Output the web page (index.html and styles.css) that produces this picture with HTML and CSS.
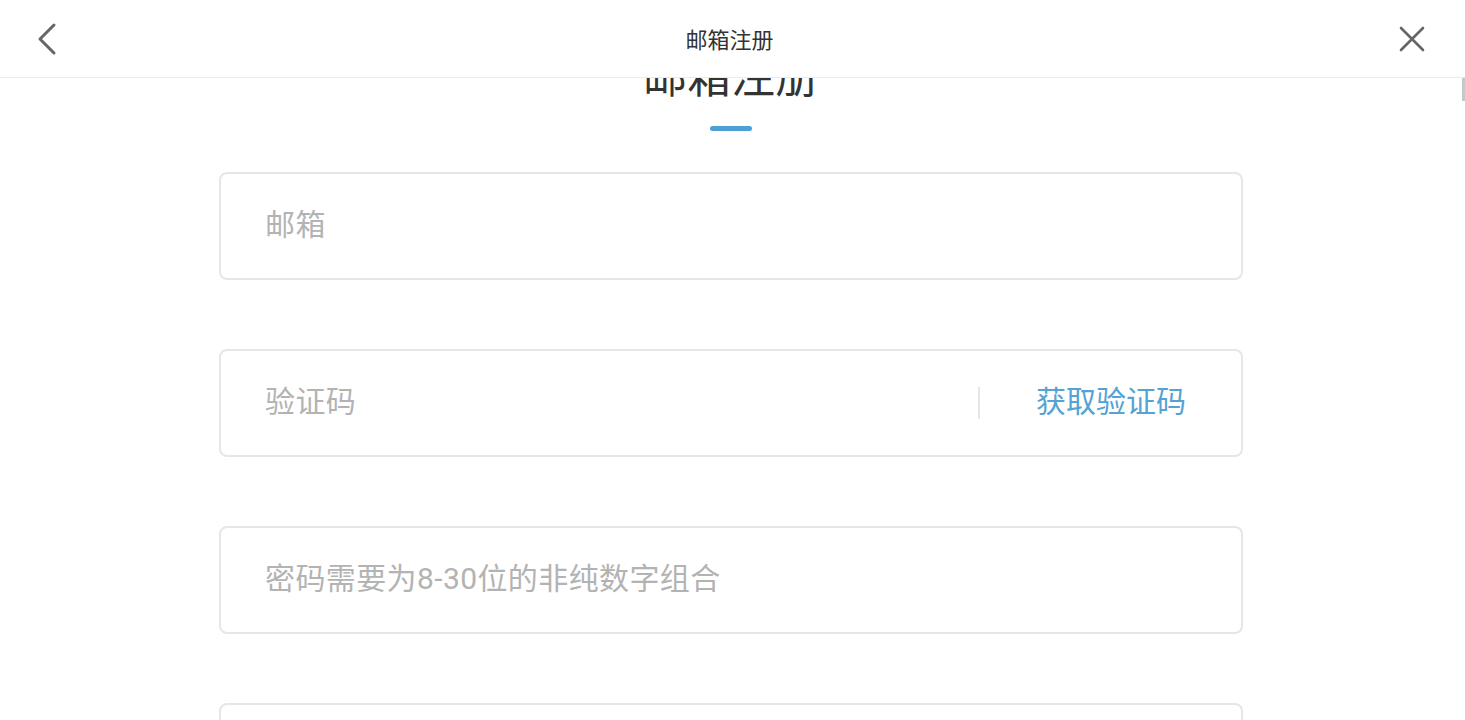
FILE: index.html
```html
<!DOCTYPE html>
<html lang="zh-CN">
<head>
<meta charset="utf-8"/>
<title>邮箱注册</title>
<link rel="stylesheet" href="styles.css">
</head>
<body>
<header class="topbar">
  <a class="topbar-btn back" href="#" aria-label="返回">
    <svg width="24" height="34" viewBox="0 0 24 34"><polyline points="19,3 5,17 19,31" fill="none" stroke="#666" stroke-width="3" stroke-linecap="round" stroke-linejoin="round"/></svg>
  </a>
  <h2 class="topbar-title">邮箱注册</h2>
  <a class="topbar-btn close" href="#" aria-label="关闭">
    <svg width="28" height="28" viewBox="0 0 28 28"><path d="M3 3 L25 25 M25 3 L3 25" fill="none" stroke="#666" stroke-width="2.6" stroke-linecap="round"/></svg>
  </a>
</header>
<div class="scroll-thumb"></div>

<main class="page">
  <h1 class="page-title">邮箱注册</h1>
  <div class="title-bar"></div>

  <form class="reg-form" onsubmit="return false;">
    <div class="field">
      <input type="email" placeholder="邮箱"/>
    </div>
    <div class="field">
      <input type="text" placeholder="验证码"/>
      <span class="divider"></span>
      <a class="get-code" href="#">获取验证码</a>
    </div>
    <div class="field">
      <input type="password" placeholder="密码需要为8-30位的非纯数字组合"/>
    </div>
    <div class="field">
      <input type="password" placeholder="确认密码"/>
    </div>
  </form>
</main>
</body>
</html>
```

FILE: styles.css
```css
body {
  margin: 0;
  background: #fff;
  font-family: Roboto, "Noto Sans CJK SC", sans-serif;
  color: #333;
  overflow: hidden;
}
.topbar {
  position: fixed;
  top: 0;
  left: 0;
  right: 0;
  height: 77px;
  padding-right: 6px;
  background: #fff;
  border-bottom: 1px solid #ebebeb;
  display: flex;
  align-items: center;
  justify-content: space-between;
  z-index: 10;
}
.topbar-btn {
  display: flex;
  align-items: center;
  justify-content: center;
  width: 94px;
  height: 77px;
}
.topbar-title {
  margin: 0 0 2px;
  font-size: 22px;
  font-weight: normal;
  color: #333;
}
.scroll-thumb {
  position: fixed;
  top: 78px;
  right: 0;
  width: 3px;
  height: 23px;
  background: #c8c8c8;
  z-index: 11;
}
.page {
  width: calc(100% - 3px);
  padding-top: 57px;
  display: flex;
  flex-direction: column;
  align-items: center;
}
.page-title {
  margin: 0;
  font-size: 44px;
  line-height: 43px;
  font-weight: normal;
  color: #333;
}
.title-bar {
  width: 42px;
  height: 5px;
  margin-top: 26px;
  border-radius: 3px;
  background: #4d9fd6;
}
.reg-form {
  width: 1024px;
  margin-top: 41px;
  display: flex;
  flex-direction: column;
  gap: 69px;
}
.field {
  height: 104px;
  border: 2px solid #e6e6e6;
  border-radius: 8px;
  display: flex;
  align-items: center;
}
.field input {
  flex: 1;
  min-width: 0;
  height: 100%;
  border: none;
  outline: none;
  background: transparent;
  padding: 0 0 4px 44px;
  box-sizing: border-box;
  font-family: inherit;
  font-size: 30px;
  letter-spacing: 0.4px;
  color: #333;
}
.field input::placeholder {
  color: #b3b3b3;
}
.divider {
  width: 2px;
  height: 32px;
  background: #e6e6e6;
}
.get-code {
  padding: 0 55px 9px 56px;
  font-size: 30px;
  color: #55a2d4;
  text-decoration: none;
}
```
